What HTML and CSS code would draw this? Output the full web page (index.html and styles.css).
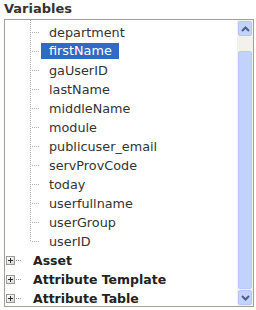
FILE: index.html
```html
<!DOCTYPE html>
<html lang="en">
<head>
  <meta charset="UTF-8">
  <title>Variables</title>
  <link rel="stylesheet" href="styles.css">
</head>
<body>
  <div class="panel">
    <div class="panel-title">Variables</div>

    <div class="tree-box">
      <div class="tree">
        <ul class="leaves">
          <li>department</li>
          <li class="selected"><span>firstName</span></li>
          <li>gaUserID</li>
          <li>lastName</li>
          <li>middleName</li>
          <li>module</li>
          <li>publicuser_email</li>
          <li>servProvCode</li>
          <li>today</li>
          <li>userfullname</li>
          <li>userGroup</li>
          <li>userID</li>
        </ul>
        <ul class="groups">
          <li><i class="expander"></i><i class="dash"></i>Asset</li>
          <li><i class="expander"></i><i class="dash"></i>Attribute Template</li>
          <li><i class="expander"></i><i class="dash"></i>Attribute Table</li>
        </ul>
      </div>

      <!-- scrollbar drawn by hand, xp style -->
      <div class="scrollbar">
        <div class="sb-btn">
          <svg width="9" height="6" viewBox="0 0 9 6"><path d="M1 5 L4.5 1.5 L8 5" fill="none" stroke="#4d6185" stroke-width="2"/></svg>
        </div>
        <div class="sb-track">
          <div class="sb-thumb"></div>
        </div>
        <div class="sb-btn">
          <svg width="9" height="6" viewBox="0 0 9 6"><path d="M1 1 L4.5 4.5 L8 1" fill="none" stroke="#4d6185" stroke-width="2"/></svg>
        </div>
      </div>
    </div>
  </div>
</body>
</html>
```

FILE: styles.css
```css
body {
  margin: 0;
  background: #fff;
  font-family: 'DejaVu Sans', Verdana, sans-serif;
  color: #333;
}

.panel {
  padding: 2px 2px 3px 4px;
}

.panel-title {
  font-size: 13px;
  font-weight: bold;
  line-height: 14px;
  color: #333;
  margin-bottom: 3px;
}

.tree-box {
  display: flex;
  height: 286px;
  border: 1px solid #a09f98;
  overflow: hidden;
}

.tree {
  flex: 1;
  font-size: 12.8px;
}

.tree ul {
  list-style: none;
  margin: 0;
  padding: 0;
}

/* vertical connector, dotted */
.leaves {
  padding-top: 3px !important;
  background: repeating-linear-gradient(to bottom, #b0b0b0 0 1px, transparent 1px 2px) 25px 0 / 1px 222px no-repeat;
}

.leaves li {
  height: 19px;
  line-height: 19px;
  padding-left: 44px;
  color: #333;
  white-space: nowrap;
  background: repeating-linear-gradient(to right, #b0b0b0 0 1px, transparent 1px 2px) 27px 9px / 7px 1px no-repeat;
}

.leaves li.selected {
  padding-left: 36px;
}

.leaves li.selected span {
  display: inline-block;
  background: #316ac5;
  color: #fff;
  line-height: 16px;
  padding: 0 7px 0 8px;
  vertical-align: top;
  margin-top: 1px;
}

.groups li {
  display: flex;
  align-items: center;
  height: 19px;
  font-size: 12.5px;
  font-weight: bold;
  color: #222;
  white-space: nowrap;
}

.expander {
  position: relative;
  width: 7px;
  height: 7px;
  margin-left: 1px;
  border: 1px solid #9a9a9a;
  background: linear-gradient(135deg, #fff, #d8d8d0);
}

.expander::before {
  content: '';
  position: absolute;
  left: 1px;
  top: 3px;
  width: 5px;
  height: 1px;
  background: #2b2b2b;
}

.expander::after {
  content: '';
  position: absolute;
  left: 3px;
  top: 1px;
  width: 1px;
  height: 5px;
  background: #2b2b2b;
}

.dash {
  width: 5px;
  height: 1px;
  margin: 0 12px 0 1px;
  background: repeating-linear-gradient(to right, #909090 0 1px, transparent 1px 2px);
}

.scrollbar {
  width: 16px;
  display: flex;
  flex-direction: column;
  background: #f3f1ec;
}

.sb-btn {
  height: 15px;
  margin: 1px 1px 0 1px;
  display: flex;
  align-items: center;
  justify-content: center;
  background: #c3d3fd;
  border: 1px solid #b4c7f4;
  border-radius: 2px;
  box-sizing: border-box;
}

.sb-btn:last-child {
  margin: 0 1px 1px 1px;
}

.sb-track {
  flex: 1;
  padding: 15px 0 1px 0;
}

.sb-thumb {
  height: 100%;
  margin: 0 1px;
  background: #c1d2fc;
  border: 1px solid #b8cbf6;
  border-radius: 2px;
  box-sizing: border-box;
}
```
